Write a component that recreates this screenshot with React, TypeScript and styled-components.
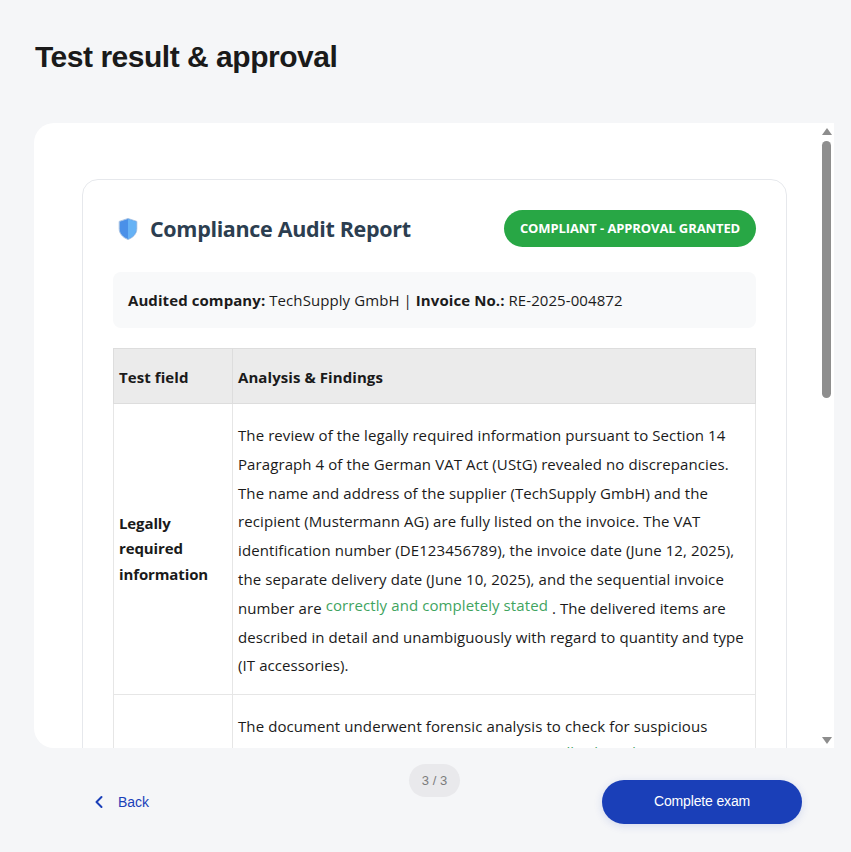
import React from "react";
import styled, { createGlobalStyle } from "styled-components";

const Global = createGlobalStyle`
  html, body { margin: 0; padding: 0; background: #f5f6f8; }
  body { font-family: "Liberation Sans", Arial, sans-serif; }
  * { box-sizing: border-box; }
`;

const Page = styled.div`
  width: 851px;
  height: 852px;
  overflow: hidden;
  background: #f5f6f8;
  display: flex;
  flex-direction: column;
  padding: 39px 17px 0 34px;
`;

const Title = styled.h1`
  margin: 0 0 49px 1px;
  font-size: 30px;
  line-height: 35px;
  font-weight: 700;
  letter-spacing: -0.48px;
  color: #1a1a1a;
`;

const Panel = styled.section`
  position: relative;
  width: 800px;
  height: 625px;
  flex: none;
  background: #fff;
  border-radius: 20px 0 0 20px;
  overflow: hidden;
  padding: 56px 47px 0 48px;
`;

const ScrollTrack = styled.div`
  position: absolute;
  top: 0;
  right: 0;
  bottom: 0;
  width: 13px;
  background: #fff;
`;

const Arrow = styled.div<{ $up?: boolean }>`
  position: absolute;
  left: 1px;
  ${(p) => (p.$up ? "top: 5px;" : "bottom: 4px;")}
  width: 0;
  height: 0;
  border-left: 5px solid transparent;
  border-right: 5px solid transparent;
  ${(p) => (p.$up ? "border-bottom: 7px solid #8d8d8d;" : "border-top: 7px solid #8d8d8d;")}
`;

const Thumb = styled.div`
  position: absolute;
  left: 1px;
  top: 18px;
  width: 9px;
  height: 257px;
  border-radius: 5px;
  background: #8e8e8e;
`;

const Card = styled.article`
  width: 705px;
  border: 1px solid #e6e8ec;
  border-radius: 16px;
  padding: 30px;
  background: #fff;
  font-family: "Open Sans", "Noto Sans", sans-serif;
`;

const CardHeader = styled.header`
  display: flex;
  justify-content: space-between;
  align-items: center;
  margin-bottom: 25px;
`;

const ReportTitle = styled.h2`
  margin: 0;
  display: flex;
  align-items: center;
  gap: 11px;
  padding-left: 4px;
  font-size: 21.5px;
  line-height: 29px;
  font-weight: 700;
  letter-spacing: -0.33px;
  color: #2c3e50;
`;

const Badge = styled.span`
  display: block;
  width: 252px;
  height: 37px;
  border-radius: 19px;
  background: #28a745;
  color: #fff;
  font-size: 13px;
  line-height: 36px;
  font-weight: 700;
  letter-spacing: -0.1px;
  text-align: center;
  white-space: nowrap;
`;

const Meta = styled.div`
  height: 56px;
  padding: 0 15px;
  margin-bottom: 20px;
  border-radius: 8px;
  background: #f8f9fa;
  color: #1c1c1c;
  font-size: 15px;
  line-height: 56px;
  letter-spacing: 0.08px;
  white-space: nowrap;
`;

const Table = styled.table`
  width: 643px;
  border-collapse: collapse;
  table-layout: fixed;
  color: #1a1a1a;
  font-size: 15px;
`;

const HeadCell = styled.th`
  height: 55px;
  padding: 2px 5px 0;
  background: #ebebeb;
  border: 1px solid #dddddd;
  text-align: left;
  font-weight: 700;
  letter-spacing: 0.08px;
`;

const FieldCell = styled.td`
  padding: 0 5px;
  border: 1px solid #e6e6e6;
  font-weight: 700;
  line-height: 25.5px;
  letter-spacing: -0.12px;
  vertical-align: middle;
`;

const TextCell = styled.td`
  padding: 17px 4px 14px 5px;
  border: 1px solid #e6e6e6;
  line-height: 28.8px;
  letter-spacing: 0.09px;
  vertical-align: top;
`;

const Good = styled.span`
  color: #3fa45f;
  line-height: 1;
  vertical-align: 3px;
`;

const Footer = styled.footer`
  display: grid;
  grid-template-columns: 375px 51px 1fr;
  width: 768px;
  padding-top: 16px;
`;

const BackButton = styled.button`
  align-self: start;
  justify-self: start;
  display: flex;
  align-items: center;
  gap: 14px;
  margin: 30px 0 0 60px;
  padding: 0;
  border: 0;
  background: none;
  color: #1a3fb8;
  font: 400 14px/16px "Liberation Sans", Arial, sans-serif;
`;

const Step = styled.div`
  height: 33px;
  border-radius: 17px;
  background: #e9e9ec;
  color: #7c7c7c;
  font-size: 13px;
  font-weight: 400;
  line-height: 33px;
  text-align: center;
`;

const PrimaryButton = styled.button`
  justify-self: end;
  width: 200px;
  height: 44px;
  margin-top: 16px;
  padding: 0 0 2px;
  border: 0;
  border-radius: 22px;
  background: #1a3fb8;
  color: #fff;
  font: 400 14px/16px "Liberation Sans", Arial, sans-serif;
  letter-spacing: -0.15px;
  box-shadow: 0 2px 8px rgba(26, 63, 184, 0.15);
`;

const Shield = () => (
  <svg width="22" height="24" viewBox="0 0 22 24" aria-hidden="true">
    <path d="M11 1.5 2.2 4.4v7.4c0 5 3.7 8.7 8.8 10.7 5.1-2 8.8-5.7 8.8-10.7V4.4Z" fill="#4a90e8" stroke="#a9c4e4" strokeWidth="1" />
    <path d="M11 2v20c4.7-1.9 8.3-5.4 8.3-10.2V4.8Z" fill="#66b2f5" />
  </svg>
);

const Chevron = () => (
  <svg width="10" height="14" viewBox="0 0 10 14" aria-hidden="true">
    <path d="M7.5 2 2.5 7l5 5" fill="none" stroke="#1a3fb8" strokeWidth="2" strokeLinecap="round" strokeLinejoin="round" />
  </svg>
);

export default function App() {
  return (
    <Page>
      <Global />
      <Title>Test result &amp; approval</Title>
      <Panel>
        <Card>
          <CardHeader>
            <ReportTitle>
              <Shield />
              Compliance Audit Report
            </ReportTitle>
            <Badge>COMPLIANT - APPROVAL GRANTED</Badge>
          </CardHeader>
          <Meta>
            <strong>Audited company:</strong> TechSupply GmbH | <strong>Invoice No.:</strong> RE-2025-004872
          </Meta>
          <Table>
            <colgroup>
              <col style={{ width: 119 }} />
              <col />
            </colgroup>
            <thead>
              <tr>
                <HeadCell>Test field</HeadCell>
                <HeadCell>Analysis &amp; Findings</HeadCell>
              </tr>
            </thead>
            <tbody>
              <tr>
                <FieldCell>Legally required information</FieldCell>
                <TextCell>
                  The review of the legally required information pursuant to Section 14 Paragraph 4 of the German VAT Act (UStG) revealed no discrepancies. The name and address of the supplier (TechSupply GmbH) and the recipient (Mustermann AG) are fully listed on the invoice. The VAT identification number (DE123456789), the invoice date (June 12, 2025), the separate delivery date (June 10, 2025), and the sequential invoice number are <Good>correctly and completely stated</Good> . The delivered items are described in detail and unambiguously with regard to quantity and type (IT accessories).
                </TextCell>
              </tr>
              <tr>
                <FieldCell />
                <TextCell>
                  The document underwent forensic analysis to check for suspicious alterations in fonts, spacing, layout. <Good>No manually altered</Good> figures were found.
                </TextCell>
              </tr>
            </tbody>
          </Table>
        </Card>
        <ScrollTrack>
          <Arrow $up />
          <Thumb />
          <Arrow />
        </ScrollTrack>
      </Panel>
      <Footer>
        <BackButton type="button">
          <Chevron />
          Back
        </BackButton>
        <Step>3 / 3</Step>
        <PrimaryButton type="button">Complete exam</PrimaryButton>
      </Footer>
    </Page>
  );
}
